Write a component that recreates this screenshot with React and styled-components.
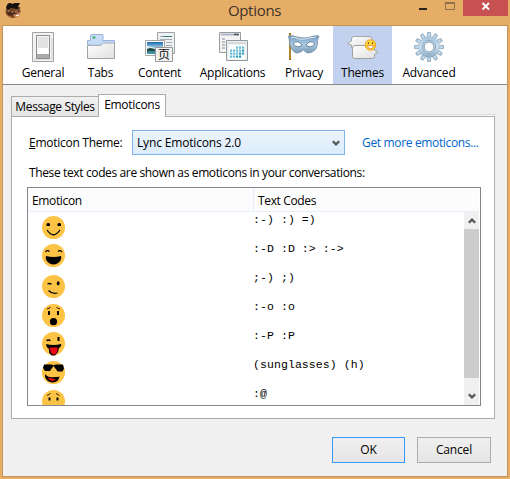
import React from "react";
import styled, { createGlobalStyle } from "styled-components";

const Global = createGlobalStyle`
  * { box-sizing: border-box; }
  body { margin: 0; overflow: hidden; }
  button { font: inherit; color: inherit; padding: 0; border: 0; background: none; letter-spacing: inherit; }
  svg { display: block; flex: none; }
`;

const Window = styled.div`
  width: 510px;
  height: 479px;
  background: #e6ad66;
  display: flex;
  flex-direction: column;
  padding: 0 2px 2px;
  font-family: "Open Sans", "Noto Sans", sans-serif;
  font-size: 12px;
  letter-spacing: -0.16px;
  line-height: 16px;
  color: #000;
`;

const TitleBar = styled.header`
  height: 25px;
  flex: none;
  display: grid;
  grid-template-columns: 148px 1fr 152px;
  padding-left: 3px;
`;

const Title = styled.h1`
  margin: 0;
  font-size: 15px;
  font-weight: 400;
  letter-spacing: -0.3px;
  line-height: 21px;
  text-align: center;
  color: #3d342b;
`;

const WindowControls = styled.div`
  display: flex;
  justify-content: flex-end;
  height: 16px;
`;

const Client = styled.main`
  flex: 1;
  width: 506px;
  border: 1px solid #c4945a;
  background: #f0f0f0;
  display: flex;
  flex-direction: column;
`;

const Toolbar = styled.nav`
  height: 59px;
  flex: none;
  display: flex;
  background: #fff;
  border-bottom: 1px solid #8a8a8a;
  padding-left: 11px;
`;

const ToolButton = styled.button`
  width: ${(p) => p.$width}px;
  display: flex;
  flex-direction: column;
  align-items: center;
  padding-top: 5px;
  gap: 2px;
  white-space: nowrap;
  letter-spacing: -0.22px;
  background: ${(p) => (p.$active ? "#c2d2ee" : "transparent")};
`;

const TabStrip = styled.div`
  display: flex;
  align-items: flex-end;
  height: 22px;
  margin: 9px 9px 0 8px;
  flex: none;
  box-shadow: inset 0 -1px #f7f7f7, inset 0 -2px #dedede;
`;

const Tab = styled.button`
  width: ${(p) => p.$width}px;
  height: ${(p) => (p.$active ? 23 : 20)}px;
  margin-bottom: ${(p) => (p.$active ? -1 : 0)}px;
  margin-left: ${(p) => (p.$active ? -1 : 0)}px;
  padding-bottom: ${(p) => (p.$active ? 2 : 0)}px;
  position: relative;
  z-index: ${(p) => (p.$active ? 1 : 0)};
  border: 1px solid #acacac;
  border-bottom: 0;
  background: ${(p) => (p.$active ? "#fff" : "linear-gradient(#f0f0f0, #e5e5e5)")};
  letter-spacing: ${(p) => p.$spacing}px;
  white-space: nowrap;
`;

const Panel = styled.section`
  width: 484px;
  height: 303px;
  margin-left: 8px;
  border: 1px solid #acacac;
  background: #fff;
  padding: 13px 13px 12px 15px;
  display: flex;
  flex-direction: column;
`;

const ThemeRow = styled.div`
  display: flex;
  align-items: center;
  padding-left: 2px;
  height: 25px;
  white-space: nowrap;
`;

const FieldLabel = styled.label`
  width: 103px;
  flex: none;
  padding-top: 1px;
  letter-spacing: -0.27px;
`;

const Select = styled.button`
  width: 213px;
  flex: none;
  height: 25px;
  border: 1px solid #7eb4ea;
  background: linear-gradient(#ecf4fc, #dcecfc);
  display: flex;
  align-items: center;
  justify-content: space-between;
  padding: 1px 4px 0;
`;

const Link = styled.a`
  color: #0066cc;
  margin-left: 17px;
  padding-top: 1px;
  letter-spacing: -0.34px;
`;

const Caption = styled.p`
  margin: 10px 0 6px 2px;
  letter-spacing: -0.37px;
  white-space: nowrap;
`;

const ListBox = styled.div`
  width: 454px;
  height: 219px;
  border: 1px solid #828790;
  padding-right: 1px;
  display: flex;
  flex-direction: column;
`;

const ListHeader = styled.div`
  display: grid;
  grid-template-columns: 226px 1fr;
  height: 24px;
  flex: none;
  background: #fcfcfc;
  border-bottom: 1px solid #e5f0fb;
  letter-spacing: -0.35px;
`;

const HeaderCell = styled.div`
  padding: 5px 4px 0;
  border-right: ${(p) => (p.$last ? "0" : "1px solid #e5f0fb")};
`;

const ListBody = styled.div`
  flex: 1;
  min-height: 0;
  display: flex;
`;

const Rows = styled.div`
  flex: 1;
  overflow: hidden;
`;

const Row = styled.div`
  display: grid;
  grid-template-columns: 211px 1fr;
  padding: 0 0 0 14px;
  height: 29px;
`;

const FaceCell = styled.div`
  padding-top: ${(p) => 4 + p.$shift}px;
`;

const Codes = styled.code`
  font-family: "Liberation Mono", monospace;
  font-size: 11.5px;
  letter-spacing: 0.08px;
  line-height: 16px;
  white-space: pre;
`;

const ScrollBar = styled.div`
  width: 15px;
  background: #f0f0f0;
  display: flex;
  flex-direction: column;
  justify-content: space-between;
`;

const ScrollArrow = styled.div`
  height: ${(p) => p.$height}px;
  padding-top: ${(p) => p.$drop ?? 0}px;
  display: flex;
  align-items: center;
  justify-content: center;
`;

const Thumb = styled.div`
  height: 149px;
  background: #cdcdcd;
`;

const Footer = styled.footer`
  display: flex;
  justify-content: flex-end;
  gap: 12px;
  padding: 18px 16px 0 0;
`;

const DialogButton = styled.button`
  width: ${(p) => (p.$primary ? 73 : 74)}px;
  height: 26px;
  border: 1px solid ${(p) => (p.$primary ? "#3399ff" : "#acacac")};
  background: linear-gradient(#f0f0f0, #e5e5e5);
`;

const AppIcon = () => (
  <svg width="18" height="22" viewBox="0 0 18 22">
    <ellipse cx="8" cy="11.5" rx="7.5" ry="6.5" fill="#7a4928" />
    <path d="M1 8Q2 3 5 3l3 1 1-1h6l-2 4 3 1-4 1-6-1-3 2Z" fill="#17100e" />
    <path d="M2 12l4-2 3 3 5-2 1 3-5 2-7-1Z" fill="#4b281a" />
    <path d="M3 11h2m1 1h2m2 0h3m-5 3h5" stroke="#d19a70" />
    <path d="M9 15l6-3v4l-5 2Z" fill="#d68e65" />
    <path d="M1 14q2 3 5 3" stroke="#b07443" fill="none" />
    <path d="M11 15.500h3" stroke="#fff1df" />
  </svg>
);

const ControlIcons = () => (
  <svg width="91" height="16" viewBox="0 0 91 16">
    <path d="M2 8h8v2H2Z" fill="#2b231b" />
    <path d="M28.5 3h9v6.5h-9Z" fill="none" stroke="#92704a" />
    <path d="M28 3h10" stroke="#92704a" strokeWidth="2" />
    <path d="M46 0h45v16H46Z" fill="#c75050" />
    <path d="M65.5 3l6.5 6.5M72 3l-6.5 6.5" stroke="#fff" strokeWidth="1.9" />
  </svg>
);

const Defs = () => (
  <svg width="0" height="0">
    <defs>
      <linearGradient id="gray" x2="1" y2="1"><stop stopColor="#fff" /><stop offset="1" stopColor="#dedede" /></linearGradient>
      <linearGradient id="blue" x2="0" y2="1"><stop stopColor="#7799b7" /><stop offset=".5" stopColor="#a9c9e3" /><stop offset="1" stopColor="#7899b3" /></linearGradient>
      <linearGradient id="gear" x2="0" y2="1"><stop stopColor="#a9c6dc" /><stop offset=".5" stopColor="#c9dfef" /><stop offset="1" stopColor="#8aa9c1" /></linearGradient>
      <linearGradient id="sky" x2="0" y2="1"><stop stopColor="#1567ae" /><stop offset=".55" stopColor="#bce4f1" /><stop offset=".6" stopColor="#376d68" /><stop offset="1" stopColor="#429bb8" /></linearGradient>
    </defs>
  </svg>
);

const GeneralIcon = () => (
  <svg width="32" height="32" viewBox="0 0 32 32">
    <path d="M5.5 1.5h21v29h-21Z" fill="#f2f2f2" stroke="#a3a3a3" />
    <path d="M7 28h18V7" fill="none" stroke="#d0d0d0" />
    <path d="M9.5 4.5h13v23h-13Z" fill="#f5f5f5" stroke="#8c8c8c" />
    <path d="M11 6h10v11H11Z" fill="#e2e2e2" />
    <path d="M10 23h12v4H10Z" fill="#aaa" />
    <path d="M11 17h10v6H11Z" fill="#fff" />
  </svg>
);

const TabsIcon = () => (
  <svg width="32" height="32" viewBox="0 0 32 32">
    <path d="M2.500 12V9.500H5.500V4.500Q5.500 3.500 6.500 3.500H17q1 0 1 1v5h11.500v4h-27Z" fill="#c8dcf6" stroke="#9bb4d8" />
    <path d="M2.500 14.500h13l3-2.500h11v15.500h-27Z" fill="url(#gray)" stroke="#a2a2a2" />
    <path d="M3.500 13.500h12l3-2.500h10.500" stroke="#b7d1f3" strokeWidth="1.500" fill="none" />
    <circle cx="9" cy="6.500" r="1.500" fill="#49b980" />
  </svg>
);

const ContentIcon = () => (
  <svg width="32" height="32" viewBox="0 0 32 32">
    <path d="M13.500 1.500h17v21h-17Z" fill="#eef0f1" stroke="#9da5a9" />
    <path d="M16 5.500h5m-5 3h12m-6 3h6m-6 3h6" stroke="#9eabb2" />
    <path d="M19 5.500h9" stroke="#387881" />
    <path d="M1.500 9.500h19v15h-19Z" fill="#fff" stroke="#a6a6a6" />
    <path d="M3 11h16v12H3Z" fill="url(#sky)" />
    <path d="M3 15l5 1 5 3H3Z" fill="#d8f0f2" />
    <path d="M3 18q5-3 10 2H3Z" fill="#244b43" />
    <path d="M11.500 16.500h17v14h-17Z" fill="#f2f2f2" stroke="#999" />
    <text x="14" y="28" fontFamily="Noto Sans CJK SC, sans-serif" fontSize="12" fill="#111">页</text>
  </svg>
);

const dots = [];
for (let y = 0; y < 4; y++)
  for (let x = 0; x < 5; x++)
    if (!(y === 0 && x < 2) && !(y === 3 && x > 3)) dots.push([x, y]);

const ApplicationsIcon = () => (
  <svg width="32" height="32" viewBox="0 0 32 32">
    <path d="M2.500 1.500h21v20h-21Z" fill="#f3f3f3" stroke="#9b9b9b" />
    <path d="M4 3.500h18" stroke="#acb7c8" strokeWidth="2" />
    <path d="M17 3.500h5" stroke="#4c5665" strokeWidth="1.500" />
    <path d="M5 8h3m-3 3h3m-3 3h3m-3 3h3" stroke="#838996" />
    <path d="M9.500 9.500h21v20h-21Z" fill="#eef0f1" stroke="#8f989c" />
    <path d="M11 11h18v2H11Z" fill="#d5dadd" />
    <path d="M12 14h16v14H12Z" fill="#fff" />
    {dots.map(([x, y]) => (
      <rect key={`${x}-${y}`} x={13 + x * 3} y={15.500 + y * 3} width="2.200" height="2.200" fill={x + y > 4 ? "#329dbd" : "#66bdd5"} />
    ))}
  </svg>
);

const PrivacyIcon = () => (
  <svg width="34" height="32" viewBox="0 0 34 32">
    <path d="M3 2v27" stroke="#8e671a" strokeWidth="2" />
    <path d="M3 3v25" stroke="#d4a735" />
    <path d="M1.500 5Q6 4 10 6q7 2 14 0 4-2 8-1-2 4-1.500 8-1 8-9 9-3 0-5-3-3 3-7 3-6-2-7-11Z" fill="url(#blue)" stroke="#7590a8" strokeWidth=".8" />
    <path d="M4 6.500q4-1 8 1.500 5 1 10-1l7-1" fill="none" stroke="#d0e5f3" />
    <path d="M6 13q5-5 9 1-4 4-9-1Zm13 1q4-6 9-1-5 5-9 1Z" fill="#fff" stroke="#6c879c" />
  </svg>
);

const ThemesIcon = () => (
  <svg width="34" height="32" viewBox="0 0 34 32">
    <path d="M7.500 5.500H23q3 0 3 2v9q0 2-3 2H7.500q-2 0-2-3v-1.500l-4-1.500 4-2.500V8q0-2 2-2.500Z" fill="url(#gray)" stroke="#a5a5a5" />
    <path d="M8.500 14.500h18q2 0 2 3v1.500l3.500 2.500-3.500 2v2q0 2-2 2h-18q-2 0-2-2v-8q0-3 2-3Z" fill="url(#gray)" stroke="#a0a0a0" />
    <circle cx="24.500" cy="14" r="5.200" fill="#ffdc40" stroke="#ef9f16" />
    <path d="M22.500 11.300v1.700m4-1.700v1.700" stroke="#7b4b14" strokeWidth="1.200" />
    <path d="M21.200 14.500h6.600q-1 3.300-3.300 3.300-2.300 0-3.300-3.300Z" fill="#fff" stroke="#df7f19" strokeWidth=".8" />
  </svg>
);

const teeth = Array.from({ length: 12 }, (_, i) => i * 30);
const AdvancedIcon = () => (
  <svg width="32" height="32" viewBox="0 0 32 32">
    <g fill="url(#gear)" stroke="#8ba6bb" strokeWidth=".8">
      {teeth.map((a) => (
        <path key={a} d="M14 7l.6-5.500h2.800l.6 5.500Z" transform={`rotate(${a} 16 16)`} />
      ))}
    </g>
    <circle cx="16" cy="16" r="10.300" fill="url(#gear)" />
    <circle cx="16" cy="16" r="6.700" fill="#bdd4e5" stroke="#91aec4" />
    <circle cx="16" cy="16" r="4.900" fill="#fff" stroke="#83a0b6" />
  </svg>
);

const Chevron = ({ up }) => (
  <svg width="8" height="8" viewBox="0 0 8 8">
    <path d={up ? "M.8 5.800L4 2.600l3.200 3.200" : "M.8 2.200L4 5.400l3.200-3.200"} fill="none" stroke="#555" strokeWidth="2.200" />
  </svg>
);

const faces = {
  smile: (
    <>
      <path d="M4.500 10V8l1-1h1.500l1 1v2Zm11 0V8l1-1H18l1 1v2Z" />
      <path d="M5 14q6.500 9.500 13 0" fill="none" stroke="#000" strokeWidth="1.300" />
    </>
  ),
  laugh: (
    <>
      <path d="M3.500 8q1.500-2.500 4-.500m8.500 0q2-2 4 .500" fill="none" stroke="#000" strokeWidth="1.300" />
      <path d="M4 12q7.500 2 15 0 1 2-.5 4.500-3 4-7 4t-7-4Q3 14 4 12Z" />
    </>
  ),
  wink: (
    <>
      <path d="M5.500 9q2-1.200 4 .3" fill="none" stroke="#000" strokeWidth="1.300" />
      <ellipse cx="16.200" cy="8.300" rx="1.400" ry="2.100" />
      <path d="M6.500 15.500q4 4 9 2.500" fill="none" stroke="#000" strokeWidth="1.300" />
    </>
  ),
  gasp: (
    <>
      <path d="M5 5l3.500-1.500m6 0L18 5" stroke="#000" strokeWidth=".9" />
      <path d="M6 7h2v4H6Zm9 0h2v4h-2Z" />
      <circle cx="11.500" cy="17.700" r="3.600" />
    </>
  ),
  tongue: (
    <>
      <path d="M4.500 8.700q2-1.200 4 0" fill="none" stroke="#000" strokeWidth="1.500" />
      <path d="M15.500 5h2v4h-2Z" />
      <path d="M4 12q7.500 2 15 0 1 2-2 4l-1 4-3 3.500H9.500L7 20.500V17q-3-2-3-5Z" />
      <path d="M7.500 15.500h8.200q0 6-3 7h-2q-2-1-3.200-7Z" fill="#e90712" />
    </>
  ),
  cool: (
    <>
      <path d="M2 3.500h7.500l2 .8 2-.8H21l1 4-1.500 3h-4.800L13 7l-1.500-2L10 7l-2 3H3L1 7Z" />
      <path d="M3 13q3 3.500 7.500 3.200l7-.5q-1 5.500-7 5.800Q5 21 3 16Z" />
      <path d="M6 16.500q4.500 1 8 2l-3 1.500q-4-.5-5-3.500Z" fill="#e90712" />
    </>
  ),
  angry: (
    <>
      <path d="M5 5.500l3.500-2m5.500 0l3.500 2" stroke="#000" strokeWidth=".8" />
      <path d="M6.500 7.500h2v3h-2Zm8 0h2v3h-2Z" />
    </>
  ),
};

const Face = ({ name }) => (
  <svg width="24" height="24" viewBox="0 0 24 24">
    <circle cx="11.500" cy="11.500" r="11.500" fill="#fdc345" />
    {faces[name]}
  </svg>
);

const tools = [
  ["General", 58, GeneralIcon],
  ["Tabs", 57, TabsIcon],
  ["Content", 61, ContentIcon],
  ["Applications", 85, ApplicationsIcon],
  ["Privacy", 58, PrivacyIcon],
  ["Themes", 59, ThemesIcon],
  ["Advanced", 74, AdvancedIcon],
];

const emoticons = [
  ["smile", ":-) :) =)", 0],
  ["laugh", ":-D :D :> :->", -1],
  ["wink", ";-) ;)", 1],
  ["gasp", ":-o :o", 1],
  ["tongue", ":-P :P", 0],
  ["cool", "(sunglasses) (h)", 0],
  ["angry", ":@", 0],
];

export default function App() {
  return (
    <>
      <Global />
      <Window>
        <TitleBar>
          <AppIcon />
          <Title>Options</Title>
          <WindowControls><ControlIcons /></WindowControls>
        </TitleBar>
        <Client>
          <Toolbar>
            {tools.map(([label, width, Icon]) => (
              <ToolButton key={label} $width={width} $active={label === "Themes"}>
                <Icon />
                <span>{label}</span>
              </ToolButton>
            ))}
            <Defs />
          </Toolbar>
          <TabStrip>
            <Tab $width={88} $spacing={-0.36}>Message Styles</Tab>
            <Tab $width={68} $spacing={-0.3} $active>Emoticons</Tab>
          </TabStrip>
          <Panel>
            <ThemeRow>
              <FieldLabel><u>E</u>moticon Theme:</FieldLabel>
              <Select>
                <span>Lync Emoticons 2.0</span>
                <Chevron />
              </Select>
              <Link>Get more emoticons...</Link>
            </ThemeRow>
            <Caption>These text codes are shown as emoticons in your conversations:</Caption>
            <ListBox>
              <ListHeader>
                <HeaderCell>Emoticon</HeaderCell>
                <HeaderCell $last>Text Codes</HeaderCell>
              </ListHeader>
              <ListBody>
                <Rows>
                  {emoticons.map(([name, codes, shift]) => (
                    <Row key={name}>
                      <FaceCell $shift={shift}><Face name={name} /></FaceCell>
                      <Codes>{codes}</Codes>
                    </Row>
                  ))}
                </Rows>
                <ScrollBar>
                  <ScrollArrow $height={17}><Chevron up /></ScrollArrow>
                  <Thumb />
                  <ScrollArrow $height={27} $drop={9}><Chevron /></ScrollArrow>
                </ScrollBar>
              </ListBody>
            </ListBox>
          </Panel>
          <Footer>
            <DialogButton $primary>OK</DialogButton>
            <DialogButton>Cancel</DialogButton>
          </Footer>
        </Client>
      </Window>
    </>
  );
}
